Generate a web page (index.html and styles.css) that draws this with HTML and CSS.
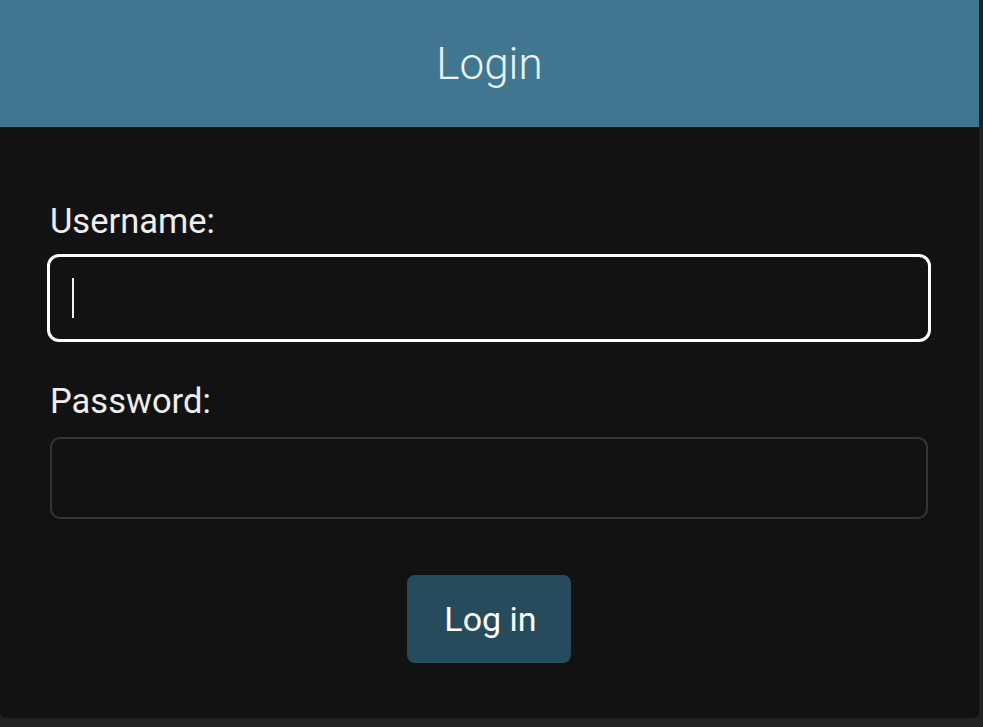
FILE: index.html
```html
<!DOCTYPE html>
<html lang="en">
<head>
<meta charset="utf-8">
<title>Login</title>
<link rel="stylesheet" href="styles.css">
</head>
<body>
<div class="card">
  <header class="header"><h1 class="title">Login</h1></header>
  <form class="form">
    <div class="row">
      <label class="label">Username:</label>
      <div class="field field-focus"><span class="caret"></span></div>
    </div>
    <div class="row row-last">
      <label class="label">Password:</label>
      <div class="field"></div>
    </div>
    <div class="actions">
      <button type="button" class="btn">Log in</button>
    </div>
  </form>
</div>
</body>
</html>
```
FILE: styles.css
```css
html, body {
  margin: 0;
  padding: 0;
  background: #222222;
  height: 100%;
}
body {
  font-family: Roboto, "Liberation Sans", sans-serif;
  overflow: hidden;
}
.card {
  width: 979px;
  background: #121212;
  border-radius: 0 0 6px 6px;
  box-sizing: border-box;
}
.header {
  height: 127px;
  background: #417690;
  display: flex;
  align-items: center;
  justify-content: center;
}
.title {
  margin: 0;
  font-weight: 300;
  font-size: 44px;
  line-height: 1;
  color: #eaf3f7;
}
.form {
  padding: 74px 51px 55px 50px;
  display: flex;
  flex-direction: column;
}
.row {
  display: flex;
  flex-direction: column;
  margin-bottom: 42px;
}
.row-last {
  margin-bottom: 56px;
}
.label {
  font-size: 34.5px;
  line-height: 40px;
  color: #eeeeee;
  margin-bottom: 16px;
}
.field {
  height: 82px;
  box-sizing: border-box;
  border: 2px solid #353535;
  border-radius: 10px;
  display: flex;
  align-items: center;
}
.field-focus {
  height: 88px;
  margin: -3px -3px -3px -3px;
  border: 3px solid #ffffff;
  border-radius: 12px;
  padding-left: 22px;
}
.caret {
  display: block;
  width: 2px;
  height: 40px;
  background: #f0f0f0;
}
.actions {
  display: flex;
  justify-content: center;
}
.btn {
  width: 164px;
  height: 88px;
  border: none;
  border-radius: 8px;
  background: #264b5d;
  color: #ffffff;
  font-family: Roboto, "Liberation Sans", sans-serif;
  font-size: 34px;
  padding: 0 0 0 3px;
}
```
